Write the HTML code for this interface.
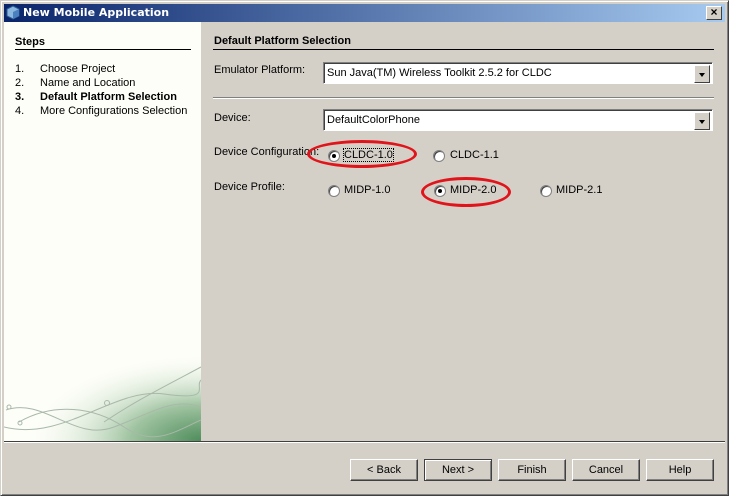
<!DOCTYPE html>
<html><head><style>
*{margin:0;padding:0;box-sizing:border-box}
body{width:729px;height:496px;background:#d4d0c8;font-family:"Liberation Sans",sans-serif;font-size:11px;color:#000;position:relative;overflow:hidden}
.abs{position:absolute}
.win{left:0;top:0;width:729px;height:496px;border:1px solid #d4d0c8;border-right-color:#404040;border-bottom-color:#404040;box-shadow:inset 1px 1px #fff,inset -1px -1px #808080}
.title{left:4px;top:4px;width:721px;height:18px;background:linear-gradient(90deg,#0a246a,#a6caf0);color:#fff;font-weight:bold;font-family:"DejaVu Sans",sans-serif;font-size:11px;line-height:18px;padding-left:19px}
.xb{left:706px;top:6px;width:16px;height:14px;background:#d4d0c8;border:1px solid;border-color:#fff #404040 #404040 #fff;font-size:12px;line-height:11px;text-align:center;color:#000;font-weight:bold}
.left{left:4px;top:22px;width:197px;height:419px;background:#fdfef8;overflow:hidden}
.combo{background:#fff;border:1px solid;border-color:#808080 #fff #fff #808080;box-shadow:inset 1px 1px #404040;height:22px;padding:4px 3px;font-size:11px}
.arrow{position:absolute;right:2px;top:2px;width:16px;height:18px;background:#d4d0c8;border:1px solid;border-color:#fff #404040 #404040 #fff}
.arrow:after{content:"";position:absolute;left:4px;top:7px;border:3px solid transparent;border-top:4px solid #000;border-bottom:0}
.radio{width:12px;height:12px;border-radius:50%;background:#fff;border:1px solid #808080;box-shadow:inset 1px 1px #404040}
.dot{position:absolute;left:3px;top:3px;width:4px;height:4px;border-radius:50%;background:#000}
.btn{top:459px;width:68px;height:22px;background:#d4d0c8;border:1px solid;border-color:#fff #404040 #404040 #fff;box-shadow:inset -1px -1px #808080;text-align:center;line-height:20px;font-size:11px}
.ell{border:3px solid #e0141a;border-radius:50%}
</style></head><body>
<div class="abs win"></div>
<div class="abs title">New Mobile Application</div>
<svg class="abs" style="left:6px;top:5px" width="15" height="15"><polygon points="7,1 13,4 13,11 7,14 1,11 1,4" fill="#8cb8e0" stroke="#2a5a90"/><polygon points="7,7 13,4 13,11 7,14" fill="#4a80c0"/></svg>
<div class="abs xb">×</div>
<div class="abs left">
<svg width="197" height="419" style="position:absolute;left:0;top:0">
<defs><radialGradient id="g" cx="1" cy="1" r="1"><stop offset="0" stop-color="#4f8d5c"/><stop offset="0.4" stop-color="#9fc3a0"/><stop offset="1" stop-color="#fdfef8" stop-opacity="0"/></radialGradient></defs>
<rect x="20" y="330" width="177" height="89" fill="url(#g)"/>
<g fill="none" stroke="#a9b8a9" stroke-width="1">
<path d="M2,388 C40,375 70,420 110,405 S170,375 197,385"/>
<path d="M15,400 C50,380 90,385 120,405 S170,410 197,398"/>
<path d="M0,405 C60,420 110,365 160,372 S190,365 197,358"/>
<path d="M100,400 C130,380 150,370 197,345"/>
<circle cx="16" cy="401" r="2"/><circle cx="103" cy="381" r="2.5"/><circle cx="5" cy="385" r="2"/>
</g></svg>
<div class="abs" style="left:11px;top:14px;font-weight:bold">Steps</div>
<div class="abs" style="left:11px;top:27px;width:176px;height:1px;background:#000"></div>
<div class="abs" style="left:11px;top:40px;line-height:14px">1.<br>2.<br><b>3.</b><br>4.</div>
<div class="abs" style="left:36px;top:40px;line-height:14px;white-space:nowrap">Choose Project<br>Name and Location<br><b>Default Platform Selection</b><br>More Configurations Selection</div>
</div>
<div class="abs" style="left:214px;top:35px;font-weight:bold">Default Platform Selection</div>
<div class="abs" style="left:213px;top:49px;width:501px;height:1px;background:#000"></div>
<div class="abs" style="left:214px;top:64px">Emulator Platform:</div>
<div class="abs combo" style="left:323px;top:62px;width:390px">Sun Java(TM) Wireless Toolkit 2.5.2 for CLDC<div class="arrow"></div></div>
<div class="abs" style="left:213px;top:97px;width:501px;background:#808080;border-bottom:1px solid #fff;height:2px"></div>
<div class="abs" style="left:214px;top:112px">Device:</div>
<div class="abs combo" style="left:323px;top:109px;width:390px">DefaultColorPhone<div class="arrow"></div></div>
<div class="abs" style="left:214px;top:146px">Device Configuration:</div>
<div class="abs radio" style="left:328px;top:150px"><div class="dot"></div></div>
<div class="abs" style="left:344px;top:149px;outline:1px dotted #000">CLDC-1.0</div>
<div class="abs radio" style="left:433px;top:150px"></div>
<div class="abs" style="left:450px;top:149px">CLDC-1.1</div>
<div class="abs" style="left:214px;top:181px">Device Profile:</div>
<div class="abs radio" style="left:328px;top:185px"></div>
<div class="abs" style="left:344px;top:184px">MIDP-1.0</div>
<div class="abs radio" style="left:434px;top:185px"><div class="dot"></div></div>
<div class="abs" style="left:450px;top:184px">MIDP-2.0</div>
<div class="abs radio" style="left:540px;top:185px"></div>
<div class="abs" style="left:556px;top:184px">MIDP-2.1</div>
<div class="abs ell" style="left:307px;top:140px;width:110px;height:28px"></div>
<div class="abs ell" style="left:421px;top:177px;width:90px;height:30px"></div>
<div class="abs" style="left:4px;top:441px;width:721px;height:1px;background:#404040"></div>
<div class="abs" style="left:4px;top:442px;width:721px;height:1px;background:#fff"></div>
<div class="abs btn" style="left:350px">&lt; Back</div>
<div class="abs btn" style="left:424px;border-color:#404040;box-shadow:inset 1px 1px #fff,inset -1px -1px #808080">Next &gt;</div>
<div class="abs btn" style="left:498px">Finish</div>
<div class="abs btn" style="left:572px">Cancel</div>
<div class="abs btn" style="left:646px">Help</div>
</body></html>
